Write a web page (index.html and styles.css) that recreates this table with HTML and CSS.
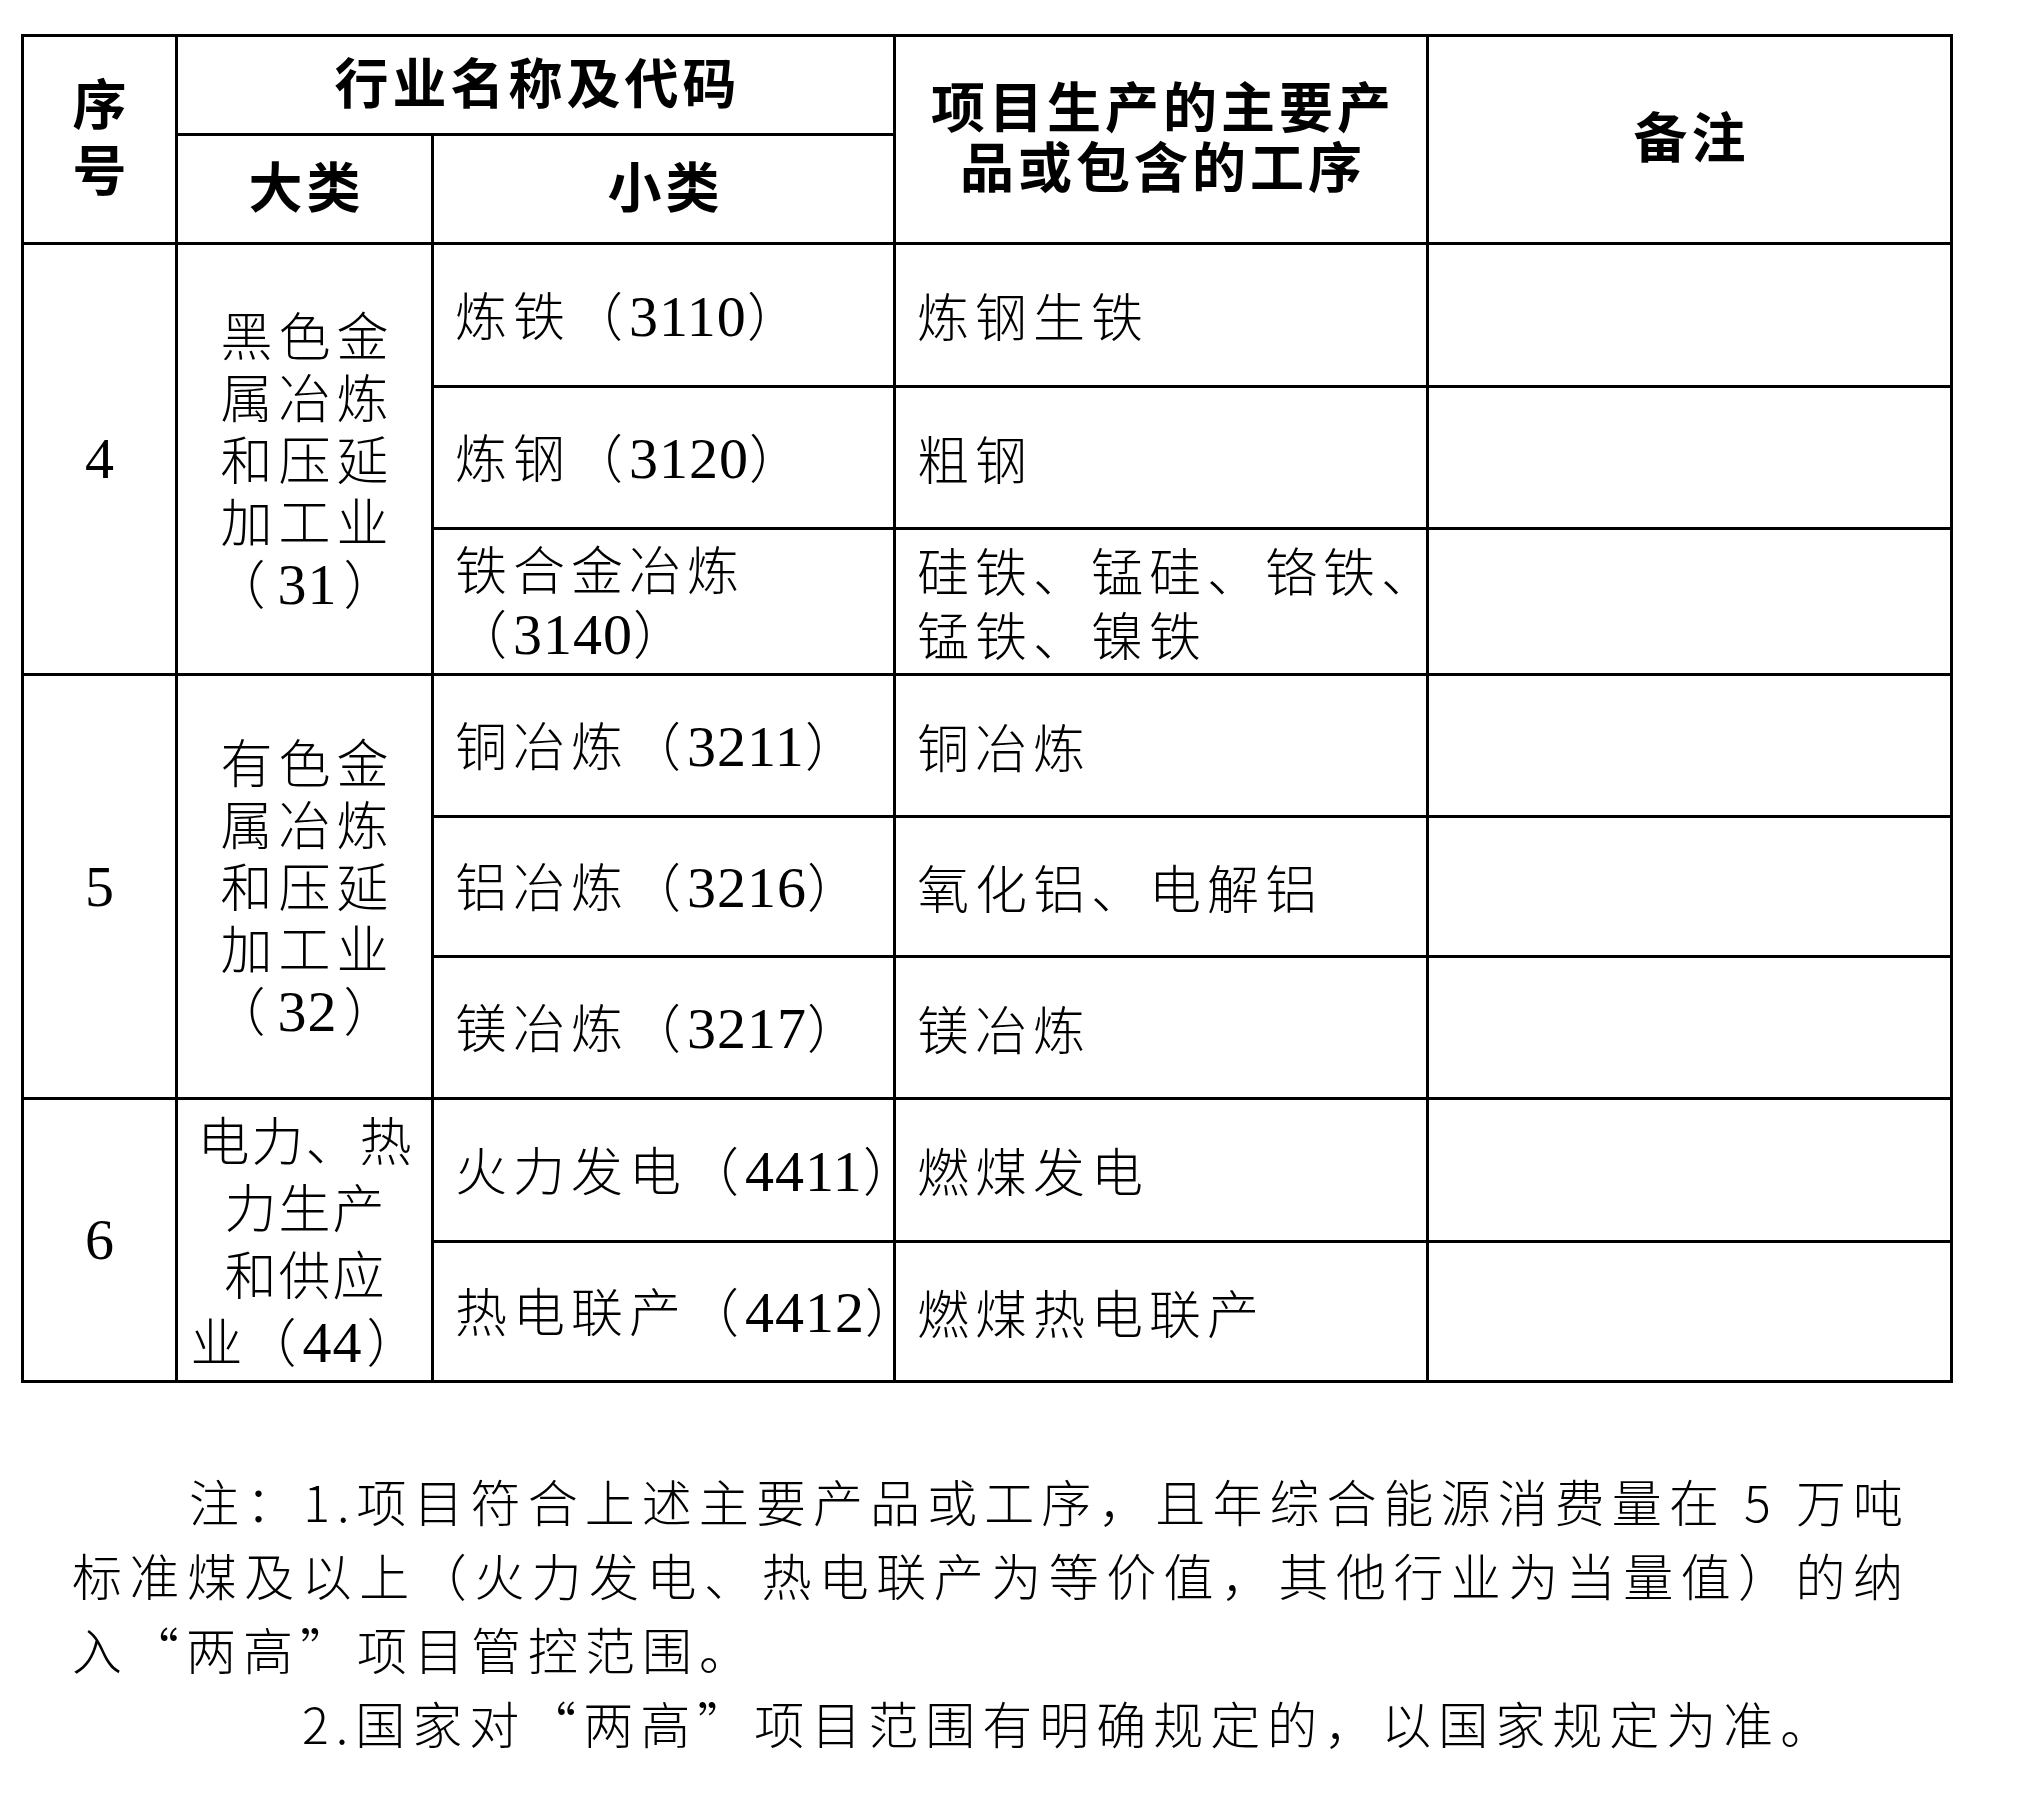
FILE: index.html
```html
<!DOCTYPE html>
<html lang="zh-CN">
<head>
<meta charset="utf-8">
<title>两高项目范围</title>
<link rel="stylesheet" href="styles.css">
</head>
<body>
<div class="page">
  <table class="grid">
    <colgroup>
      <col class="c1"><col class="c2"><col class="c3"><col class="c4"><col class="c5">
    </colgroup>
    <thead>
      <tr class="h1">
        <th rowspan="2" class="seq-h">序<br>号</th>
        <th colspan="2">行业名称及代码</th>
        <th rowspan="2" class="prod-h">项目生产的主要产<br>品或包含的工序</th>
        <th rowspan="2">备注</th>
      </tr>
      <tr class="h2">
        <th>大类</th>
        <th>小类</th>
      </tr>
    </thead>
    <tbody>
      <tr class="r1">
        <td rowspan="3" class="seq">4</td>
        <td rowspan="3" class="cat">黑色金<br>属冶炼<br>和压延<br>加工业<br>（<span class="n">31</span>）</td>
        <td class="sub">炼铁（<span class="n">3110</span>）</td>
        <td class="prod">炼钢生铁</td>
        <td></td>
      </tr>
      <tr class="r2">
        <td class="sub">炼钢（<span class="n">3120</span>）</td>
        <td class="prod">粗钢</td>
        <td></td>
      </tr>
      <tr class="r3">
        <td class="sub">铁合金冶炼<br>（<span class="n">3140</span>）</td>
        <td class="prod">硅铁、锰硅、铬铁、<br>锰铁、镍铁</td>
        <td></td>
      </tr>
      <tr class="r4">
        <td rowspan="3" class="seq">5</td>
        <td rowspan="3" class="cat">有色金<br>属冶炼<br>和压延<br>加工业<br>（<span class="n">32</span>）</td>
        <td class="sub">铜冶炼（<span class="n">3211</span>）</td>
        <td class="prod">铜冶炼</td>
        <td></td>
      </tr>
      <tr class="r5">
        <td class="sub">铝冶炼（<span class="n">3216</span>）</td>
        <td class="prod">氧化铝、电解铝</td>
        <td></td>
      </tr>
      <tr class="r6">
        <td class="sub">镁冶炼（<span class="n">3217</span>）</td>
        <td class="prod">镁冶炼</td>
        <td></td>
      </tr>
      <tr class="r7">
        <td rowspan="2" class="seq">6</td>
        <td rowspan="2" class="cat cat-tight">电力、热<br>力生产<br>和供应<br>业（<span class="n">44</span>）</td>
        <td class="sub">火力发电（<span class="n">4411</span>）</td>
        <td class="prod">燃煤发电</td>
        <td></td>
      </tr>
      <tr class="r8">
        <td class="sub">热电联产（<span class="n">4412</span>）</td>
        <td class="prod">燃煤热电联产</td>
        <td></td>
      </tr>
    </tbody>
  </table>

  <div class="notes">
    <p class="ln first just">注：1.项目符合上述主要产品或工序，且年综合能源消费量在 5 万吨</p>
    <p class="ln just">标准煤及以上（火力发电、热电联产为等价值，其他行业为当量值）的纳</p>
    <p class="ln">入“两高”项目管控范围。</p>
    <p class="ln second">2.国家对“两高”项目范围有明确规定的，以国家规定为准。</p>
  </div>
</div>
</body>
</html>
```

FILE: styles.css
```css
html, body {
  margin: 0;
  padding: 0;
  background: #ffffff;
}

body {
  color: #000000;
  font-family: "Noto Sans CJK SC", "Noto Sans", sans-serif;
}

.page {
  padding-top: 34px;
}

.grid {
  margin-left: 21px;
  width: 1929px;
  border-collapse: collapse;
  table-layout: fixed;
}

.c1 { width: 154px; }
.c2 { width: 256px; }
.c3 { width: 462px; }
.c4 { width: 533px; }
.c5 { width: 524px; }

.grid th,
.grid td {
  border: 3px solid #000000;
  padding: 0;
  vertical-align: middle;
}

.grid th {
  font-size: 54px;
  font-weight: 700;
  letter-spacing: 4px;
  padding: 0 0 9px 4px;
  line-height: 60px;
  text-align: center;
}

.grid th.seq-h {
  line-height: 66px;
}

.h1 { height: 99px; }
.h2 { height: 109px; }

.r1 { height: 143px; }
.r2 { height: 142px; }
.r3 { height: 146px; }
.r4 { height: 142px; }
.r5 { height: 140px; }
.r6 { height: 142px; }
.r7 { height: 143px; }
.r8 { height: 140px; }

.grid td {
  font-size: 52px;
  font-weight: 300;
  letter-spacing: 6px;
  line-height: 64px;
  white-space: nowrap;
}

.grid td.seq {
  font-family: "Liberation Serif", serif;
  font-size: 58px;
  letter-spacing: 0;
  text-align: center;
}

.grid td.cat {
  text-align: center;
  padding-left: 6px;
  line-height: 62px;
}

.grid td.cat .n {
  padding: 0 6px;
}

.grid td.cat-tight {
  letter-spacing: 2px;
  padding-left: 2px;
  line-height: 67px;
}

.grid td.cat-tight .n {
  padding: 0 4px;
}

.grid td.sub,
.grid td.prod {
  text-align: left;
  padding-left: 21px;
}

.n {
  font-family: "Liberation Serif", serif;
  font-size: 58px;
  letter-spacing: 1px;
}

.notes {
  margin: 80px 0 0 72px;
  width: 1838px;
}

.ln {
  margin: 0;
  font-size: 50px;
  font-weight: 300;
  letter-spacing: 7px;
  line-height: 74px;
  white-space: nowrap;
}

.ln.just {
  text-align: justify;
  text-align-last: justify;
  white-space: normal;
}

.ln.first {
  text-indent: 117px;
}

.ln.second {
  padding-left: 230px;
}
```
